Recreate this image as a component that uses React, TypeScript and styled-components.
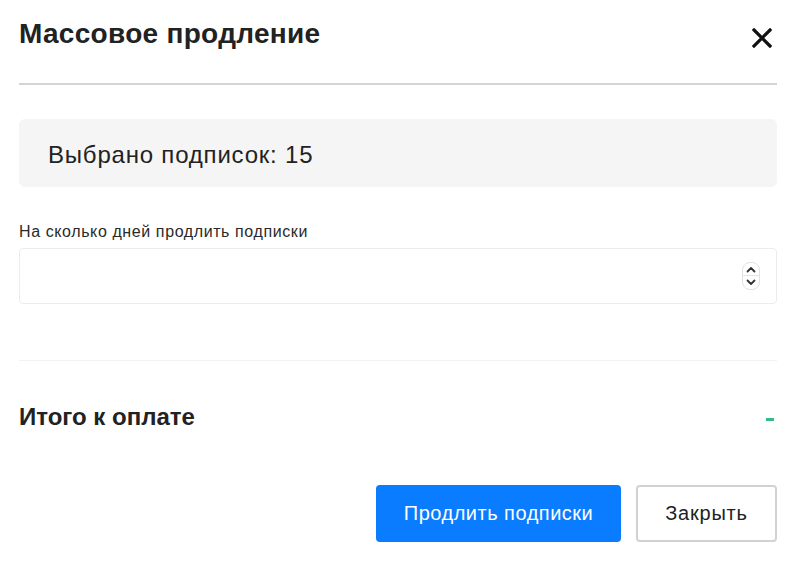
import React from 'react'
import styled, { createGlobalStyle } from 'styled-components'

const GlobalStyle = createGlobalStyle`
  html, body {
    margin: 0;
    padding: 0;
    background: #ffffff;
  }
  body {
    font-family: "Liberation Sans", Arial, sans-serif;
    color: #222222;
  }
`

// =============================================================================
// LAYOUT
// =============================================================================

const Modal = styled.div`
  width: 800px;
  height: 570px;
  box-sizing: border-box;
  padding: 0 23px 0 19px;
  display: flex;
  flex-direction: column;
`

const Header = styled.div`
  display: flex;
  align-items: center;
  justify-content: space-between;
  height: 83px;
  border-bottom: 2px solid #d4d4d4;
`

const Title = styled.h1`
  margin: 0 0 16px;
  font-size: 28px;
  font-weight: 700;
  color: #222222;
  letter-spacing: 0.3px;
`

const CloseButton = styled.button`
  border: none;
  background: none;
  padding: 0;
  margin: 0 5px 8px 0;
  width: 20px;
  height: 20px;
  display: flex;
  align-items: center;
  justify-content: center;
  cursor: pointer;
`

const SummaryBox = styled.div`
  margin-top: 34px;
  height: 68px;
  box-sizing: border-box;
  padding: 3px 0 0 29px;
  background: #f5f5f5;
  border-radius: 6px;
  display: flex;
  align-items: center;
  font-size: 24px;
  letter-spacing: 0.8px;
  color: #222222;
`

// =============================================================================
// FORM FIELD
// =============================================================================

const Field = styled.div`
  margin-top: 36px;
  display: flex;
  flex-direction: column;
  gap: 7px;
`

const Label = styled.label`
  font-size: 16px;
  letter-spacing: 0.6px;
  color: #2a2a2a;
`

const InputBox = styled.div`
  height: 56px;
  box-sizing: border-box;
  border: 1px solid #ececec;
  border-radius: 4px;
  display: flex;
  align-items: center;
  justify-content: flex-end;
  padding-right: 16px;
`

const Spinner = styled.div`
  width: 18px;
  height: 28px;
  box-sizing: border-box;
  border: 1px solid #e2e2e2;
  border-radius: 8px;
  display: flex;
  flex-direction: column;
  align-items: center;
  justify-content: space-around;
  padding: 2px 0;
`

const SpinnerSplit = styled.span`
  width: 100%;
  height: 1px;
  background: #e4e4e4;
`

const Separator = styled.hr`
  border: none;
  height: 1px;
  background: #f2f2f2;
  margin: 56px 0 0;
`

// =============================================================================
// TOTAL + ACTIONS
// =============================================================================

const TotalRow = styled.div`
  margin-top: 42px;
  display: flex;
  align-items: center;
  justify-content: space-between;
`

const TotalLabel = styled.span`
  font-size: 24px;
  font-weight: 700;
  color: #222222;
`

const TotalValue = styled.span`
  width: 8px;
  height: 3px;
  background: #2fbf86;
  margin: 4px 3px 0 0;
`

const Actions = styled.div`
  margin-top: 54px;
  display: flex;
  justify-content: flex-end;
  gap: 15px;
`

const Button = styled.button<{ $primary?: boolean }>`
  height: 57px;
  box-sizing: border-box;
  border-radius: 4px;
  font-family: "Liberation Sans", Arial, sans-serif;
  font-size: 20px;
  letter-spacing: ${({ $primary }) => ($primary ? '0.5px' : '0.8px')};
  cursor: pointer;
  padding: 0 20px;
  min-width: ${({ $primary }) => ($primary ? '245px' : '141px')};
  background: ${({ $primary }) => ($primary ? '#0a7cff' : '#ffffff')};
  color: ${({ $primary }) => ($primary ? '#ffffff' : '#222222')};
  border: ${({ $primary }) => ($primary ? 'none' : '2px solid #d2d2d2')};
`

const Chevron = ({ up }: { up?: boolean }) => (
  <svg width="10" height="7" viewBox="0 0 10 7">
    <path
      d={up ? 'M1.5 5.5 L5 2 L8.5 5.5' : 'M1.5 1.5 L5 5 L8.5 1.5'}
      fill="none"
      stroke="#333"
      strokeWidth="1.8"
      strokeLinecap="round"
      strokeLinejoin="round"
    />
  </svg>
)

export default function App() {
  return (
    <>
      <GlobalStyle />
      <Modal>
        <Header>
          <Title>Массовое продление</Title>
          <CloseButton aria-label="Закрыть">
            <svg width="20" height="20" viewBox="0 0 20 20">
              <path d="M2 2 L18 18 M18 2 L2 18" stroke="#111" strokeWidth="3.2" strokeLinecap="square" />
            </svg>
          </CloseButton>
        </Header>

        <SummaryBox>Выбрано подписок: 15</SummaryBox>

        <Field>
          <Label>На сколько дней продлить подписки</Label>
          <InputBox>
            <Spinner>
              <Chevron up />
              <SpinnerSplit />
              <Chevron />
            </Spinner>
          </InputBox>
        </Field>

        <Separator />

        <TotalRow>
          <TotalLabel>Итого к оплате</TotalLabel>
          <TotalValue />
        </TotalRow>

        <Actions>
          <Button $primary>Продлить подписки</Button>
          <Button>Закрыть</Button>
        </Actions>
      </Modal>
    </>
  )
}
